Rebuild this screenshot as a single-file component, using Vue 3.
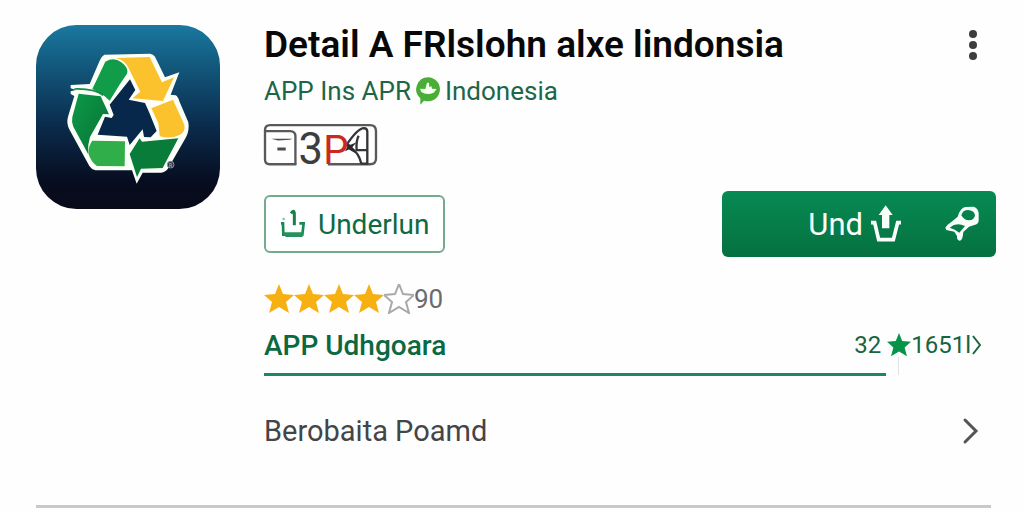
<template>
  <main class="page">
    <section class="app">
      <svg class="app-icon" viewBox="30 27 552 552" role="img" aria-label="App icon">
        <defs>
          <linearGradient id="iconBg" x1="0" y1="0" x2="0" y2="1">
            <stop offset="0" stop-color="#1a789f" />
            <stop offset="0.25" stop-color="#125478" />
            <stop offset="0.55" stop-color="#0a2b4c" />
            <stop offset="0.85" stop-color="#070d20" />
            <stop offset="1" stop-color="#080a18" />
          </linearGradient>
          <linearGradient id="leafDark" x1="0" y1="0" x2="1" y2="1">
            <stop offset="0" stop-color="#0c9a48" />
            <stop offset="1" stop-color="#087035" />
          </linearGradient>
        </defs>
        <rect x="30" y="27" width="552" height="552" rx="122" fill="url(#iconBg)" />
        <path
          fill="#fbfff8"
          d="M235 116 L372 113 Q382 114 387 122 L417 184 L460 169 L434 236 L449 238 Q456 242 460 256 L487 319 Q491 342 480 364 L427 456 Q419 469 405 470 L350 470 L332 503 L318 463 L208 463 Q197 461 190 450 L129 338 Q121 320 126 302 L145 240 L134 234 L134 226 L150 222 L134 217 L134 207 L191 204 L221 134 Q226 121 235 116 Z"
        />
        <path
          fill="#08284b"
          d="M312 190 L328 222 L308 251 L357 261 L370 290 L392 345 L374 364 L354 363 L350 340 L311 387 L303 362 L215 356 L237 302 L257 306 L263 297 L251 266 Z"
        />
        <path fill="#109c48" d="M238 137 Q264 122 286 139 Q309 156 303 173 L282 204 L251 254 L231 236 L199 219 Z" />
        <path fill="#fcc22e" d="M270 126 L371 123 L408 199 L444 184 L411 255 L320 247 L343 227 L309 159 Q298 133 270 126 Z" />
        <path fill="#fcc22e" d="M376 277 L441 251 L475 326 Q479 347 461 357 Q430 371 401 360 L397 322 Z" />
        <path fill="url(#leafDark)" d="M158 233 L224 241 L249 295 L231 294 L192 363 Q185 385 186 413 L142 332 Q136 317 139 303 Z" />
        <path fill="#2fae49" d="M199 374 L297 376 L296 451 L213 450 Q194 437 187 412 Q187 389 199 374 Z" />
        <path fill="#087c38" d="M341 367 L348 377 L457 367 L410 456 L345 458 L333 483 L311 414 Z" />
        <path fill="none" stroke="#138b45" stroke-width="5" d="M145 219 Q205 217 232 238" />
        <circle cx="434" cy="446" r="10" fill="#26364b" stroke="#8b939e" stroke-width="3" />
        <text x="434" y="452" class="mark">R</text>
      </svg>

      <div class="details">
        <header class="heading">
          <h1>Detail A FRlslohn alxe lindonsia</h1>
          <button class="menu" type="button" aria-label="More options">
            <svg width="10" height="32" viewBox="0 0 10 32">
              <circle v-for="y in [5, 16, 27]" :key="y" cx="5" :cy="y" r="4" fill="#3d3d3f" />
            </svg>
          </button>
        </header>

        <a class="developer" href="#">
          <span>APP Ins APR</span>
          <svg width="26" height="28" viewBox="0 0 78 84" aria-hidden="true">
            <path fill="#48ae35" d="M39 1 A36 36 0 1 1 27 71 L16 83 L16 64 A36 36 0 0 1 39 1 Z" />
            <path fill="#f6fff0" d="M15 35 L31 36 L36 17 L42 17 L43 31 L49 27 L51 35 L65 36 L56 47 Q36 56 19 45 Z" />
          </svg>
          <span>Indonesia</span>
        </a>

        <svg class="badge" viewBox="25 25 338 122" aria-label="3P">
          <g fill="none" stroke="#58595b" stroke-width="7" stroke-linejoin="round">
            <path d="M122 145 H42 Q28 145 28 130 V43 Q28 28 43 28 H342 Q360 28 360 46 V128 Q360 145 342 145 H216" />
            <path d="M31 46 H103 Q119 46 119 62 V145" />
            <path d="M270 90 Q304 38 324 37 Q334 37 334 48 V143 H316 Q309 112 286 96" stroke="#333538" />
            <path d="M308 60 Q300 76 302 103 H333" stroke="#333538" />
          </g>
          <path d="M46 69 H110 L102 72 L67 74 Z M65 95 H90 V104 H65 Z" fill="#4b4c4e" />
          <path d="M265 79 L284 87 L302 79 L289 94 L300 113 L279 101 L267 106 L274 93 Z" fill="#282a2d" />
          <text x="128" y="143" class="badge-text">3</text>
          <text x="202" y="143" class="badge-text red">P</text>
        </svg>

        <div class="actions">
          <button class="btn outline" type="button">
            <svg width="26" height="30" viewBox="0 0 78 90" aria-hidden="true">
              <path fill="none" stroke="#168a50" stroke-width="8" d="M3 43 H9 L10 77 H67 L71 43 H58" />
              <path fill="#24925a" d="M8 70 H70 L67 84 H17 Z" />
              <path fill="none" stroke="#187e4c" stroke-width="9" d="M33 13 Q42 0 43 13 V49" />
              <circle cx="11" cy="30" r="4" fill="#8bc4a6" />
            </svg>
            Underlun
          </button>
          <button class="btn solid" type="button">
            <span>Und</span>
            <svg width="32" height="38" viewBox="0 0 96 114" aria-hidden="true">
              <path fill="#f8fffb" d="M47 1 L68 30 H58 V70 H36 V30 H26 Z" />
              <path fill="none" stroke="#f8fffb" stroke-width="11" d="M3 53 H14 L26 104 H70 L83 53 H93" />
            </svg>
            <svg class="hook" width="34" height="36" viewBox="0 0 102 108" aria-hidden="true">
              <path
                fill="#f8fffb"
                fill-rule="evenodd"
                d="M1 65 L8 56 L22 46 L38 32 Q46 5 62 3 L86 2 Q100 7 101 22 V45 Q99 56 88 57 L72 62 L55 78 L53 92 Q50 104 43 104 Q35 102 36 90 L28 77 L4 72 Z M49 28 Q53 12 69 12 Q88 13 90 28 Q88 43 72 43 Q57 43 49 28 Z M14 65 Q34 48 60 60 L43 80 Q30 69 14 65 Z"
              />
            </svg>
          </button>
        </div>

        <div class="rating" aria-label="4 out of 5 stars">
          <svg v-for="n in 5" :key="n" class="star" :class="{ empty: n > 4 }" viewBox="0 0 30 30">
            <path :d="starPath" />
          </svg>
          <span>90</span>
        </div>

        <div class="tab-row">
          <a class="tab" href="#">APP Udhgoara</a>
          <div class="stats">
            <span>32</span>
            <span class="marker">
              <svg class="star small" viewBox="0 0 30 30"><path :d="starPath" /></svg>
            </span>
            <span>1651l</span>
            <svg width="10" height="22" viewBox="0 0 10 22"><path d="M2 2 L9 11 L2 20" fill="none" stroke="#17643f" stroke-width="2" /></svg>
          </div>
        </div>
        <div class="progress"></div>

        <a class="more" href="#">
          <span>Berobaita Poamd</span>
          <svg width="18" height="28" viewBox="0 0 18 28" aria-hidden="true">
            <path d="M3 3 L14 14 L3 25" fill="none" stroke="#555" stroke-width="3" stroke-linecap="round" />
          </svg>
        </a>
      </div>
    </section>
    <hr />
  </main>
</template>

<script setup>
const starPath = 'M15 0 L19 10 L30 11 L22 18 L25 29 L15 23 L5 29 L8 18 L0 11 L11 10 Z';
</script>

<style>
body {
  background: #fefefe;
}
</style>

<style scoped>
.page {
  padding: 24px 28px 0 36px;
  font-family: Roboto, "Liberation Sans", sans-serif;
}

.app {
  display: flex;
  align-items: flex-start;
  gap: 44px;
}

.app-icon {
  flex: none;
  width: 184px;
  height: 184px;
  margin-top: 1px;
}

.mark {
  font-size: 15px;
  text-anchor: middle;
  fill: #c2c7cc;
}

.details {
  flex: 1;
  min-width: 0;
}

.heading {
  display: flex;
  align-items: center;
  justify-content: space-between;
  height: 42px;
}

h1 {
  margin: 0;
  font-size: 37px;
  font-weight: 600;
  line-height: 42px;
  white-space: nowrap;
  color: #080808;
}

button {
  font-family: inherit;
  cursor: pointer;
}

.menu {
  display: flex;
  margin-right: 18px;
  padding: 0;
  border: 0;
  background: none;
}

a {
  text-decoration: none;
}

.developer {
  display: flex;
  align-items: center;
  gap: 4px;
  height: 32px;
  margin-top: 9px;
  font-size: 26px;
  color: #1d6649;
}

.badge {
  display: block;
  width: 113px;
  height: 41px;
  margin-top: 17px;
  overflow: visible;
}

.badge-text {
  font-size: 130px;
  fill: #3c3d3f;
}

.badge-text.red {
  fill: #c9291e;
  font-size: 120px;
}

.actions {
  display: flex;
  align-items: center;
  justify-content: space-between;
  margin-top: 26px;
}

.btn {
  display: flex;
  align-items: center;
  box-sizing: border-box;
  border-radius: 6px;
}

.outline {
  gap: 12px;
  height: 58px;
  padding: 0 14px;
  border: 2px solid #73ab8e;
  background: #fff;
  font-size: 28px;
  color: #0d6a43;
}

.solid {
  justify-content: flex-end;
  gap: 7px;
  width: 274px;
  height: 66px;
  padding: 0 17px;
  border: 0;
  background: linear-gradient(#078a54, #05713f);
  font-size: 31px;
  color: #f8fffb;
}

.hook {
  margin-left: 36px;
}

.rating {
  display: flex;
  align-items: center;
  height: 32px;
  margin-top: 26px;
  font-size: 26px;
  color: #6a6b6d;
}

.star {
  width: 30px;
  height: 30px;
  fill: #f7b011;
}

.star.empty {
  fill: #fff;
  stroke: #a9a9a9;
  stroke-width: 2px;
}

.star.small {
  display: block;
  width: 24px;
  height: 28px;
  fill: #079448;
}

.tab-row {
  display: flex;
  align-items: center;
  justify-content: space-between;
  height: 36px;
  margin-top: 12px;
  padding-right: 15px;
}

.tab {
  font-size: 28px;
  font-weight: 500;
  color: #0b6941;
}

.stats {
  display: flex;
  align-items: center;
  font-size: 24px;
  color: #17643f;
}

.marker {
  position: relative;
  margin-left: 6px;
}

/* thin guide line hanging from the star */
.marker::after {
  content: "";
  position: absolute;
  top: 26px;
  left: 11px;
  width: 1px;
  height: 18px;
  background: #dfe3e1;
}

.progress {
  width: 85%;
  height: 3px;
  margin-top: 10px;
  background: #208660;
}

.more {
  display: flex;
  align-items: center;
  justify-content: space-between;
  height: 40px;
  margin-top: 35px;
  padding-right: 16px;
  font-size: 29px;
  color: #444547;
}

hr {
  height: 3px;
  margin: 54px 5px 0 0;
  border: 0;
  background: #c9c9c9;
}
</style>
